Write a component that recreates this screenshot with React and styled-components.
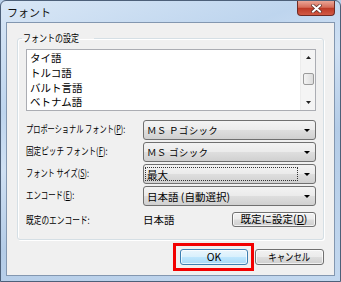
import React from 'react';
import styled, { createGlobalStyle } from 'styled-components';

const GlobalStyle = createGlobalStyle`
  html, body { margin: 0; padding: 0; background: #b9d0ea; }
  body { font-family: "Noto Sans CJK JP", "Noto Sans", sans-serif; }
`;

const Win = styled.div`
  width: 341px;
  height: 282px;
  box-sizing: border-box;
  display: flex;
  flex-direction: column;
  border: 1px solid #4d6079;
  border-radius: 6px 6px 0 0;
  background: linear-gradient(160deg, #d9e7f6 0%, #bed5ee 28%, #cfe0f3 42%, #b4cce7 62%, #c3d8ef 100%);
`;

const TitleBar = styled.div`
  height: 21px;
  display: flex;
  align-items: flex-start;
  justify-content: space-between;
  padding-left: 6px;
`;

const Title = styled.span`
  font-size: 11px;
  line-height: 22px;
  color: #111;
`;

const Close = styled.div`
  width: 38px;
  height: 15px;
  box-sizing: border-box;
  margin-right: 5px;
  border: 1px solid #6f2b24;
  border-top: none;
  border-radius: 0 0 4px 4px;
  background: linear-gradient(#eaa596 0%, #d66d5a 45%, #bd3a26 52%, #d25a45 100%);
  display: flex;
  align-items: center;
  justify-content: center;
`;

const Client = styled.div`
  flex: 1;
  margin: 0 5px 5px 5px;
  border: 1px solid #8397b0;
  background: #f0f0f0;
  padding: 8px 10px 0 10px;
  display: flex;
  flex-direction: column;
`;

const Group = styled.fieldset`
  margin: 0;
  padding: 0 7px 11px 8px;
  border: 1px solid #d5dfe5;
  border-radius: 3px;
  box-shadow: inset 1px 1px 0 #fff, 1px 1px 0 #fff;
  min-width: 0;
`;

const Legend = styled.legend`
  margin-left: -4px;
  padding: 0 1px;
  font-size: 10px;
  line-height: 14px;
  color: #000;
`;

const Narrow = styled.span`
  display: inline-block;
  white-space: pre;
  transform: scaleX(${p => p.$sx || 0.75});
  transform-origin: ${p => p.$center ? 'center' : 'left center'};
`;

const ListBox = styled.div`
  margin-top: 4px;
  height: 62px;
  box-sizing: border-box;
  border: 1px solid #abadb3;
  background: #fff;
  display: flex;
`;

const Items = styled.div`
  flex: 1;
  padding: 1px 0 0 3px;
`;

const Item = styled.div`
  font-size: 10.5px;
  line-height: 14.8px;
  color: #000;
  white-space: nowrap;
`;

const ScrollBar = styled.div`
  width: 15px;
  background: #f4f4f4;
  border-left: 1px solid #ececec;
  display: flex;
  flex-direction: column;
  align-items: center;
  justify-content: space-between;
  padding: 6px 0 6px;
  box-sizing: border-box;
`;

const Thumb = styled.div`
  width: 11px;
  height: 12px;
  box-sizing: border-box;
  border: 1px solid #9b9b9b;
  border-radius: 2px;
  background: linear-gradient(90deg, #f3f3f3, #dcdcdc);
  margin-top: -2px;
`;

const Form = styled.div`
  margin-top: 9px;
  display: grid;
  grid-template-columns: 117px 1fr;
  grid-auto-rows: 20px;
  row-gap: 2px;
`;

const Label = styled.div`
  font-size: 10px;
  color: #000;
  display: flex;
  align-items: center;
  padding-bottom: ${p => p.$up ?? 3}px;
`;

const Combo = styled.div`
  box-sizing: border-box;
  border: 1px solid #707070;
  border-radius: 3px;
  background: linear-gradient(#f3f3f3 0%, #ebebeb 48%, #dedede 52%, #d0d0d0 100%);
  display: flex;
  align-items: center;
  padding-left: ${p => p.$focus ? 1 : 3}px;
  font-size: 10.5px;
  color: #000;
`;

const Focus = styled.div`
  flex: 0 0 153px;
  height: 14px;
  box-sizing: border-box;
  border: 1px dotted #333;
  display: flex;
  align-items: center;
  padding-left: 1px;
`;

const Arrow = styled.span`
  margin-left: auto;
  margin-right: 5px;
  width: 0;
  height: 0;
  border-left: 3px solid transparent;
  border-right: 3px solid transparent;
  border-top: 3px solid #000;
`;

const FullWidth = styled.span`
  font-size: 9.5px;
  letter-spacing: 0.3px;
`;

const DefaultRow = styled.div`
  grid-column: 1 / -1;
  margin-top: 3px;
  height: 16px;
  display: grid;
  grid-template-columns: 117px 1fr auto;
  align-items: center;
`;

const Value = styled.span`
  font-size: 10.5px;
  color: #000;
`;

const Button = styled.button`
  box-sizing: border-box;
  width: ${p => p.$w}px;
  height: ${p => p.$h || 16}px;
  padding: 0;
  border: 1px solid ${p => p.$default ? '#3c7fb1' : '#707070'};
  border-radius: 3px;
  background: ${p => p.$default
    ? 'linear-gradient(#eaf6fd 0%, #d9f0fc 48%, #bee6fd 52%, #a7d9f5 100%)'
    : 'linear-gradient(#f2f2f2 0%, #ebebeb 48%, #dddddd 52%, #cfcfcf 100%)'};
  box-shadow: inset 0 0 0 1px rgba(255,255,255,0.7);
  font-family: "Noto Sans CJK JP", "Noto Sans", sans-serif;
  font-size: 10.5px;
  line-height: 1;
  color: #000;
  display: flex;
  align-items: center;
  justify-content: center;
`;

const Buttons = styled.div`
  margin-top: 3px;
  display: flex;
  justify-content: flex-end;
  align-items: center;
  gap: 1px;
`;

const Highlight = styled.div`
  border: 3px solid #f20000;
  padding: 3px 3px 3px 4px;
`;

function CloseX() {
  return (
    <svg width="11" height="9" viewBox="0 0 11 9">
      <path d="M2 1.5 L9 7.5 M9 1.5 L2 7.5" stroke="#5a2a24" strokeWidth="3.4" strokeLinecap="square" />
      <path d="M2 1.5 L9 7.5 M9 1.5 L2 7.5" stroke="#fff" strokeWidth="2" strokeLinecap="square" />
    </svg>
  );
}

function Tri({ up }) {
  return (
    <svg width="5" height="3" viewBox="0 0 5 3">
      <path d={up ? 'M0 3 L2.5 0 L5 3 Z' : 'M0 0 L2.5 3 L5 0 Z'} fill="#222" />
    </svg>
  );
}

const languages = ['タイ語', 'トルコ語', 'バルト言語', 'ベトナム語'];

export default function App() {
  return (
    <>
      <GlobalStyle />
      <Win>
        <TitleBar>
          <Title>フォント</Title>
          <Close><CloseX /></Close>
        </TitleBar>
        <Client>
          <Group>
            <Legend><Narrow $sx={0.8}>フォントの設定</Narrow></Legend>
            <ListBox>
              <Items>
                {languages.map(l => <Item key={l}>{l}</Item>)}
              </Items>
              <ScrollBar>
                <Tri up />
                <Thumb />
                <Tri />
              </ScrollBar>
            </ListBox>
            <Form>
              <Label><Narrow $sx={0.72}>プロポーショナル フォント(<u>P</u>):</Narrow></Label>
              <Combo><FullWidth>ＭＳ Ｐゴシック</FullWidth><Arrow /></Combo>
              <Label><Narrow $sx={0.76}>固定ピッチ フォント(<u>F</u>):</Narrow></Label>
              <Combo><FullWidth>ＭＳ ゴシック</FullWidth><Arrow /></Combo>
              <Label><Narrow $sx={0.72}>フォント サイズ(<u>S</u>):</Narrow></Label>
              <Combo $focus><Focus>最大</Focus><Arrow /></Combo>
              <Label><Narrow $sx={0.74}>エンコード(<u>E</u>):</Narrow></Label>
              <Combo>日本語 (自動選択)<Arrow /></Combo>
              <DefaultRow>
                <Label $up={0}><Narrow $sx={0.77}>既定のエンコード:</Narrow></Label>
                <Value>日本語</Value>
                <Button $w={84} $h={15}>既定に設定(<u>D</u>)</Button>
              </DefaultRow>
            </Form>
          </Group>
          <Buttons>
            <Highlight>
              <Button $w={68} $default>OK</Button>
            </Highlight>
            <Button $w={69}><Narrow $sx={0.8} $center>キャンセル</Narrow></Button>
          </Buttons>
        </Client>
      </Win>
    </>
  );
}
